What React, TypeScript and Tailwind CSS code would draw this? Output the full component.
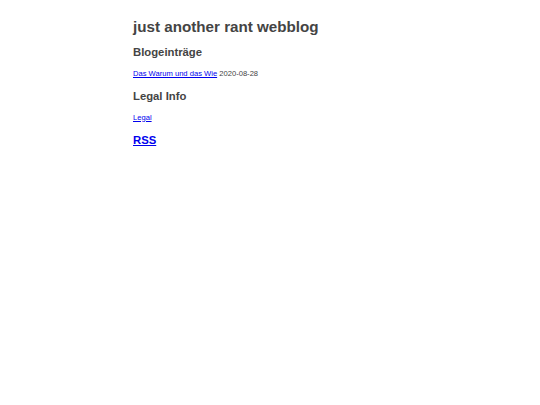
export default function App() {
  return (
    <div className="min-h-[405px] bg-white font-['Liberation_Sans',Arial,sans-serif] text-[#444444]">
      <div className="mx-auto flex w-[274px] flex-col pt-[17.5px]">
        <h1 className="text-[15.2px] font-bold leading-[17px]">just another rant webblog</h1>
        <h2 className="mt-[11px] text-[11.3px] font-bold leading-[13px]">Blogeinträge</h2>
        <p className="mt-[10px] text-[7.6px] leading-[9px]">
          <a href="#" className="text-[#0000ee] underline">Das Warum und das Wie</a> 2020-08-28
        </p>
        <h2 className="mt-[12px] text-[11.3px] font-bold leading-[13px]">Legal Info</h2>
        <p className="mt-[10px] text-[7.6px] leading-[9px]">
          <a href="#" className="text-[#0000ee] underline">Legal</a>
        </p>
        <h2 className="mt-[12px] text-[11.3px] font-bold leading-[13px]">
          <a href="#" className="text-[#0000ee] underline">RSS</a>
        </h2>
      </div>
    </div>
  );
}
